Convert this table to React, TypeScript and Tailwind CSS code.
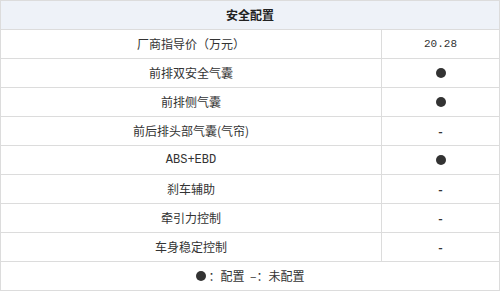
const rows: [string, string][] = [
  ["厂商指导价（万元）", "20.28"],
  ["前排双安全气囊", "●"],
  ["前排侧气囊", "●"],
  ["前后排头部气囊(气帘)", "-"],
  ["ABS+EBD", "●"],
  ["刹车辅助", "-"],
  ["牵引力控制", "-"],
  ["车身稳定控制", "-"],
];

const mono = { fontFamily: '"Liberation Mono", monospace' };

function Dot() {
  return <span className="block w-[10px] h-[10px] rounded-full bg-[#333]" />;
}

export default function App() {
  return (
    <div
      className="w-[500px] bg-white text-[12px] text-[#333]"
      style={{ fontFamily: '"Noto Sans CJK SC", "Liberation Sans", sans-serif' }}
    >
      <div className="border-t border-l border-r border-[#dcdcdc]">
        {/* header */}
        <div className="h-[29px] flex items-center justify-center bg-[#eef2f8] border-b border-[#dcdcdc] font-bold text-[#222]">
          安全配置
        </div>

        {rows.map(([name, val], i) => (
          <div key={i} className="h-[29px] flex border-b border-[#dcdcdc]">
            <div className="w-[381px] flex items-center justify-center border-r border-[#dcdcdc]">
              {name === "ABS+EBD" ? (
                <span className="text-[12px]" style={mono}>{name}</span>
              ) : (
                name
              )}
            </div>
            <div className="flex-1 flex items-center justify-center">
              {val === "●" ? (
                <Dot />
              ) : val === "-" ? (
                <span className="font-bold">-</span>
              ) : (
                <span className="text-[11px]" style={mono}>{val}</span>
              )}
            </div>
          </div>
        ))}

        {/* legend */}
        <div className="h-[29px] flex items-center justify-center border-b border-[#dcdcdc] gap-[3px]">
          <Dot />
          <span>：配置&nbsp;&nbsp;–：未配置</span>
        </div>
      </div>
    </div>
  );
}
